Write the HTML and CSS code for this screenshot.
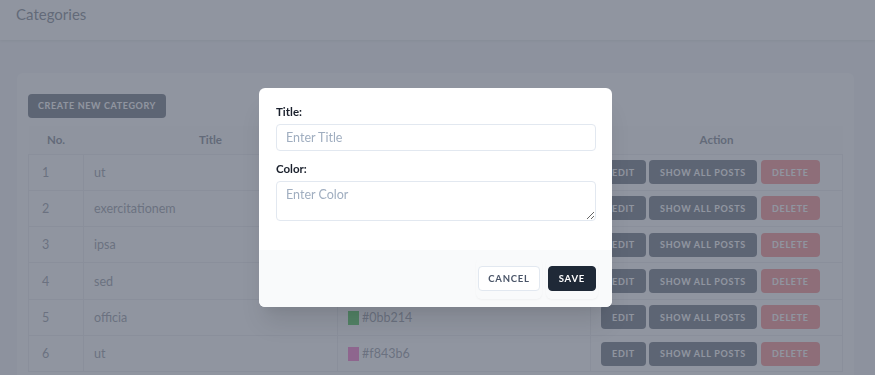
FILE: index.html
```html
<!DOCTYPE html>
<html lang="en">
<head>
  <meta charset="UTF-8" />
  <meta name="viewport" content="width=device-width, initial-scale=1.0" />
  <title>Categories</title>
  <link rel="stylesheet" href="styles.css">
</head>
<body>
  <header class="top-bar">
    <h1>Categories</h1>
  </header>

  <div class="main">
    <div class="card">
      <button class="create-button">Create New Category</button>

      <table class="category-table">
        <thead>
          <tr>
            <th class="col-no">No.</th>
            <th class="col-title">Title</th>
            <th class="col-color">Color</th>
            <th class="col-action">Action</th>
          </tr>
        </thead>
        <tbody>
          <tr>
            <td>1</td>
            <td>ut</td>
            <td><span class="swatch" style="background:#3b82f6"></span>#3b82f6</td>
            <td class="actions"><button class="btn btn-gray">Edit</button><button class="btn btn-gray">Show All Posts</button><button class="btn btn-red">Delete</button></td>
          </tr>
          <tr>
            <td>2</td>
            <td>exercitationem</td>
            <td><span class="swatch" style="background:#e4a11b"></span>#e4a11b</td>
            <td class="actions"><button class="btn btn-gray">Edit</button><button class="btn btn-gray">Show All Posts</button><button class="btn btn-red">Delete</button></td>
          </tr>
          <tr>
            <td>3</td>
            <td>ipsa</td>
            <td><span class="swatch" style="background:#6c2ad1"></span>#6c2ad1</td>
            <td class="actions"><button class="btn btn-gray">Edit</button><button class="btn btn-gray">Show All Posts</button><button class="btn btn-red">Delete</button></td>
          </tr>
          <tr>
            <td>4</td>
            <td>sed</td>
            <td><span class="swatch" style="background:#d33f2a"></span>#d33f2a</td>
            <td class="actions"><button class="btn btn-gray">Edit</button><button class="btn btn-gray">Show All Posts</button><button class="btn btn-red">Delete</button></td>
          </tr>
          <tr>
            <td>5</td>
            <td>officia</td>
            <td><span class="swatch" style="background:#0bb214"></span>#0bb214</td>
            <td class="actions"><button class="btn btn-gray">Edit</button><button class="btn btn-gray">Show All Posts</button><button class="btn btn-red">Delete</button></td>
          </tr>
          <tr>
            <td>6</td>
            <td>ut</td>
            <td><span class="swatch" style="background:#f843b6"></span>#f843b6</td>
            <td class="actions"><button class="btn btn-gray">Edit</button><button class="btn btn-gray">Show All Posts</button><button class="btn btn-red">Delete</button></td>
          </tr>
        </tbody>
      </table>
    </div>
  </div>

  <div class="overlay"></div>

  <div class="modal">
    <div class="modal-body">
      <label class="field-label" for="title">Title:</label>
      <input class="field-input" id="title" type="text" placeholder="Enter Title">

      <label class="field-label" for="color">Color:</label>
      <textarea class="field-input field-area" id="color" placeholder="Enter Color"></textarea>
    </div>
    <div class="modal-footer">
      <span class="btn-ring"><button class="modal-btn cancel-btn">Cancel</button></span>
      <span class="btn-ring"><button class="modal-btn save-btn">Save</button></span>
    </div>
  </div>
</body>
</html>
```

FILE: styles.css
```css
body {
  margin: 0;
  font-family: "Lato", "Noto Sans", sans-serif;
  background-color: #f3f4f6;
  color: #4a5568;
  overflow: hidden;
}

.top-bar {
  background-color: #fff;
  height: 40px;
  box-sizing: border-box;
  padding: 5px 16px 0;
  box-shadow: 0 1px 3px rgba(0, 0, 0, 0.12);
}

.top-bar h1 {
  margin: 0;
  font-size: 15px;
  line-height: 18px;
  font-weight: 400;
  color: #4b5563;
}

.main {
  padding: 33px 21px 0 17px;
}

.card {
  background-color: #fff;
  border-radius: 6px;
  padding: 20px 11px;
}

.create-button {
  background-color: #374151;
  color: #fff;
  border: none;
  border-radius: 4px;
  height: 24px;
  padding: 0 10px;
  font-family: inherit;
  font-size: 9px;
  font-weight: 700;
  letter-spacing: 0.07em;
  text-transform: uppercase;
  margin-bottom: 8px;
}

.category-table {
  width: 100%;
  table-layout: fixed;
  border-collapse: collapse;
  font-size: 12.5px;
}

.category-table th {
  background-color: #f9fafb;
  height: 28px;
  font-size: 11.5px;
  font-weight: 700;
  color: #4b5563;
  text-align: center;
  padding: 0;
}

.col-no { width: 55px; }
.col-title { width: 254px; }
.col-color { width: 253px; }

.category-table td {
  height: 35.3px;
  border: 1px solid #e5e7eb;
  padding: 0 11px 0 10px;
  color: #6b7280;
  vertical-align: middle;
}

.category-table td:first-child {
  padding-left: 13px;
}

.swatch {
  display: inline-block;
  width: 11px;
  height: 14px;
  vertical-align: -3px;
  margin-right: 3px;
}

.actions {
  white-space: nowrap;
}

.btn {
  height: 24px;
  border: none;
  border-radius: 4px;
  padding: 0 11px;
  margin-right: 3px;
  color: #fff;
  font-family: inherit;
  font-size: 9px;
  font-weight: 700;
  letter-spacing: 0.08em;
  text-transform: uppercase;
}

.btn-gray {
  background-color: #374151;
}

.btn-red {
  background-color: #f56565;
  margin-left: 1px;
}

.overlay {
  position: fixed;
  inset: 0;
  background-color: rgba(107, 114, 128, 0.75);
}

.modal {
  position: fixed;
  top: 88px;
  left: 259px;
  width: 353px;
  background-color: #fff;
  border-radius: 6px;
  overflow: hidden;
  box-shadow: 0 20px 25px -5px rgba(0, 0, 0, 0.1), 0 10px 10px -5px rgba(0, 0, 0, 0.04);
}

.modal-body {
  display: flex;
  flex-direction: column;
  padding: 17px 16px 29px 17px;
}

.field-label {
  font-size: 11.5px;
  font-weight: 700;
  color: #1a202c;
  margin-bottom: 6px;
}

.field-input {
  height: 27px;
  box-sizing: border-box;
  border: 1px solid #e2e8f0;
  border-radius: 4px;
  padding: 0 9px;
  font-family: inherit;
  font-size: 12.5px;
  color: #2d3748;
  margin-bottom: 11px;
}

.field-input::placeholder {
  color: #a0aec0;
}

.field-area {
  height: 40px;
  padding-top: 5px;
  margin-bottom: 0;
  resize: vertical;
}

.modal-footer {
  background-color: #f9fafb;
  display: flex;
  justify-content: flex-end;
  gap: 4px;
  padding: 8px 14px 8px 16px;
}

.btn-ring {
  display: flex;
  padding: 8px 2px;
  border-radius: 6px;
  box-shadow: 0 1px 2px rgba(0, 0, 0, 0.04);
}

.modal-btn {
  height: 25px;
  border-radius: 4px;
  font-family: inherit;
  font-size: 9.5px;
  font-weight: 700;
  letter-spacing: 0.08em;
  text-transform: uppercase;
}

.cancel-btn {
  background-color: #fff;
  border: 1px solid #e2e8f0;
  color: #4a5568;
  padding: 0 9px;
}

.save-btn {
  background-color: #1f2937;
  border: 1px solid #1f2937;
  color: #fff;
  padding: 0 10px;
}
```
